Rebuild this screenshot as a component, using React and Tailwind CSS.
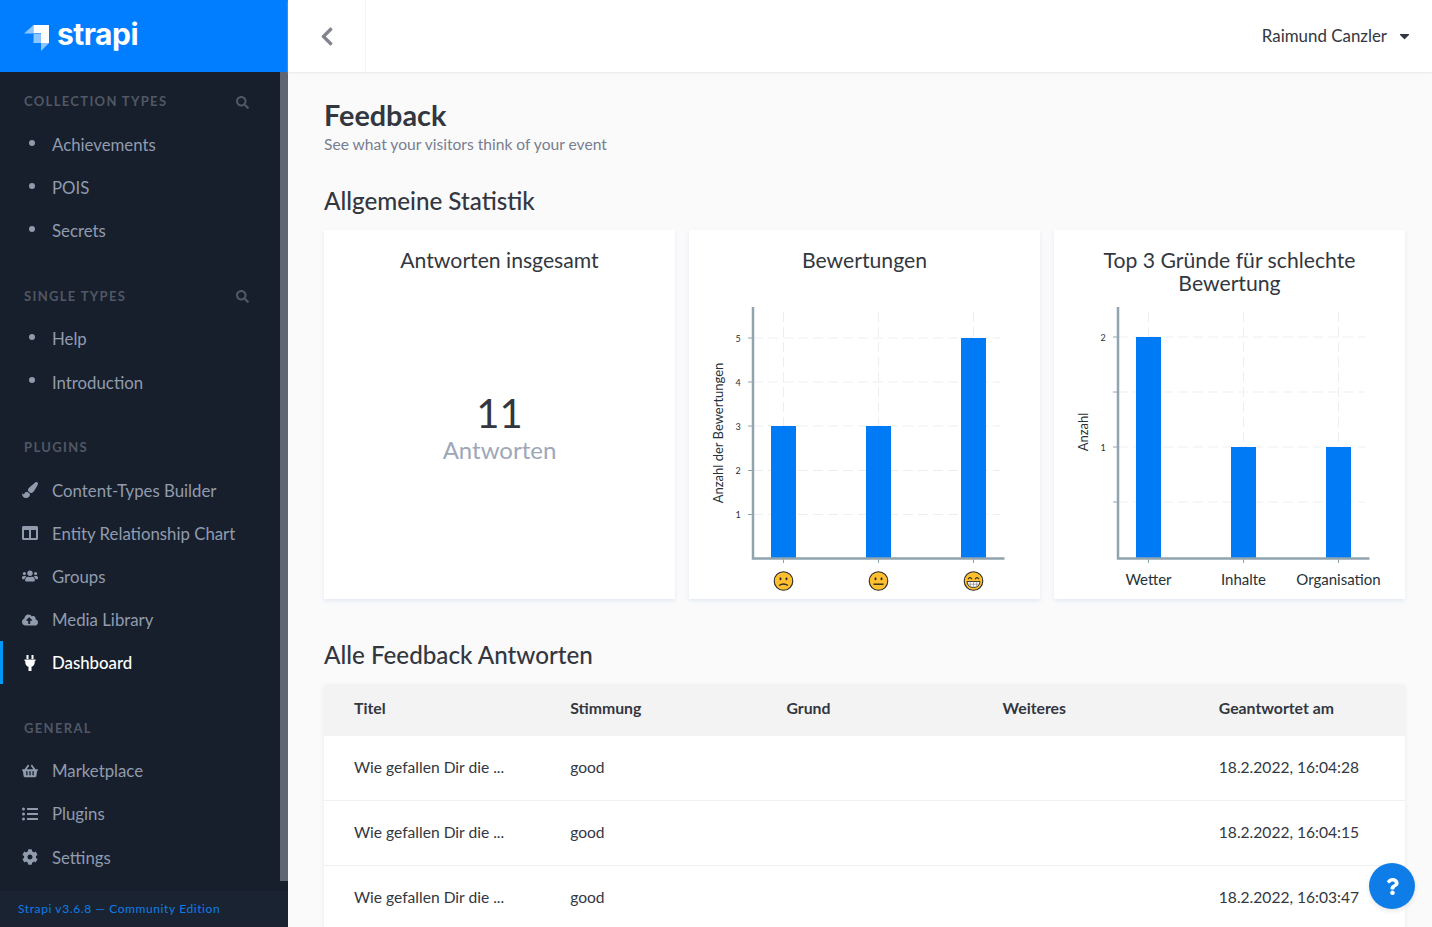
import { FaSearch, FaPaintBrush, FaColumns, FaUsers, FaCloudUploadAlt, FaShoppingBasket, FaListUl, FaCog, FaChevronLeft, FaCaretDown, FaQuestion } from 'react-icons/fa'

// upright plug, the one in the package leans
function PlugIcon({ className }) {
  return (
    <svg viewBox="0 0 16 16" className={className} fill="currentColor">
      <path d="M4.5 0h2v4h-2zM9.5 0h2v4h-2z" />
      <path d="M2.5 4.5h11v1.5h-.8v1.5c0 2.4-1.4 3.7-3.2 4.2V16h-3v-4.300c-1.800-.5-3.200-1.800-3.200-4.200V6h-.8z" />
    </svg>
  )
}

function SectionTitle({ label, search }) {
  return (
    <div className="h-[51.4px] pt-[9.6px] pl-6 pr-[31px] flex items-center justify-between">
      <span className="text-[13px] font-bold tracking-[1.33px] uppercase text-[#515764]">{label}</span>
      {search && <FaSearch className="w-[13px] h-[13px] text-[#515764]" />}
    </div>
  )
}

function NavItem({ label, icon: Icon, active }) {
  return (
    <div className={`relative h-[43.2px] flex items-center text-[16.8px] ${active ? 'text-white font-medium' : 'text-[#919BAE]'}`}>
      {active && <div className="absolute left-0 top-0 bottom-0 w-[3px] bg-[#0097F7]" />}
      <div className="w-[52px] flex justify-center pl-[8px] shrink-0">
        {Icon ? (
          <Icon className="w-[16px] h-[16px]" />
        ) : (
          <span className="w-[6px] h-[6px] mb-[4px] ml-[4px] rounded-full bg-[#919BAE]" />
        )}
      </div>
      <span>{label}</span>
    </div>
  )
}

function Sidebar() {
  return (
    <aside className="w-[288px] shrink-0 h-full flex flex-col bg-[#171F2C]">
      <div className="h-[72px] shrink-0 bg-[#007EFF] flex items-center pl-6 gap-[7px]">
        <svg width="26" height="28" viewBox="0 0 26 28" className="shrink-0 mt-[4px]">
          <path d="M9.500 1H25V19H17V9H9.500Z" fill="#fff" />
          <path d="M0 9.500L9.500 1V9.500Z M9.500 9.500H17V19H9.500Z M17 19H25L17 27Z" fill="#fff" fillOpacity="0.55" />
        </svg>
        <span className="font-['Inter',sans-serif] text-[30px] font-bold leading-none text-white tracking-[-0.5px] pb-[5px]">strapi</span>
      </div>
      <div className="flex-1 flex min-h-0">
        <nav className="flex-1 min-w-0 -mt-[0.4px]">
          <SectionTitle label="Collection Types" search />
          <NavItem label="Achievements" />
          <NavItem label="POIS" />
          <NavItem label="Secrets" />
          <div className="mt-[13.4px]">
            <SectionTitle label="Single Types" search />
            <NavItem label="Help" />
            <NavItem label="Introduction" />
          </div>
          <div className="mt-[13.4px]">
            <SectionTitle label="Plugins" />
            <NavItem label="Content-Types Builder" icon={FaPaintBrush} />
            <NavItem label="Entity Relationship Chart" icon={FaColumns} />
            <NavItem label="Groups" icon={FaUsers} />
            <NavItem label="Media Library" icon={FaCloudUploadAlt} />
            <NavItem label="Dashboard" icon={PlugIcon} active />
          </div>
          <div className="mt-[13.4px]">
            <SectionTitle label="General" />
            <NavItem label="Marketplace" icon={FaShoppingBasket} />
            <NavItem label="Plugins" icon={FaListUl} />
            <NavItem label="Settings" icon={FaCog} />
          </div>
        </nav>
        <div className="w-[8px] shrink-0 mb-[10px] bg-[#5F6573]" />
      </div>
      <div className="h-[36px] shrink-0 bg-[#1A2332] flex items-center pl-[18px] text-[12px] tracking-[0.6px] text-[#0E7DE7]">
        Strapi v3.6.8 — Community Edition
      </div>
    </aside>
  )
}

function Face({ cx, kind }) {
  return (
    <g transform={`translate(${cx} 281)`}>
      <circle r="9.3" fill="#FFBF2E" stroke="#2A2A2A" strokeWidth="1.1" />
      {kind !== 'good' && (
        <>
          <ellipse cx="-3" cy="-2.200" rx="1" ry="1.500" fill="#2A2A2A" />
          <ellipse cx="3" cy="-2.200" rx="1" ry="1.500" fill="#2A2A2A" />
        </>
      )}
      {kind === 'bad' && <path d="M-4.500 4.500Q0 1.500 4.500 4.500" fill="none" stroke="#2A2A2A" strokeWidth="1.300" />}
      {kind === 'ok' && <path d="M-5 3.200H5" stroke="#2A2A2A" strokeWidth="1.400" />}
      {kind === 'good' && (
        <>
          <path d="M-5.500 -1.800Q-3.500 -5 -1.500 -1.800M1.500 -1.800Q3.500 -5 5.500 -1.800" fill="none" stroke="#2A2A2A" strokeWidth="1.100" />
          <path d="M-6.500 0.500H6.500Q6 6.500 0 6.500Q-6 6.500 -6.500 0.500Z" fill="#fff" stroke="#2A2A2A" strokeWidth="0.900" />
          <path d="M-6 3.200H6M-3.200 0.500V6M0 0.500V6.500M3.200 0.500V6" stroke="#777" strokeWidth="0.600" />
        </>
      )}
    </g>
  )
}

function BarChart({ axisLabel, axisLabelY, grid, bars, xLabels, faces }) {
  return (
    <svg viewBox="0 0 351 299" className="block w-full h-[299px] shrink-0 font-['Lato',sans-serif]">
      {grid.map((g) => (
        <g key={g.y}>
          <line x1="64" x2="311" y1={g.y} y2={g.y} stroke="#ECEFF1" strokeDasharray="10 5" />
          <line x1="59" x2="64" y1={g.y} y2={g.y} stroke="#90A4AE" />
          {g.label && (
            <text x="49" y={g.y + 3.5} textAnchor="middle" fontSize="9" fill="#263238">{g.label}</text>
          )}
        </g>
      ))}
      {bars.map((b) => (
        <g key={b.x}>
          <line x1={b.x} x2={b.x} y1="12" y2="258" stroke="#ECEFF1" strokeDasharray="10 5" />
          <rect x={b.x - 12.5} y={b.y} width="25" height={258 - b.y} fill="#007AF5" />
          <line x1={b.x} x2={b.x} y1="258" y2="263" stroke="#90A4AE" />
        </g>
      ))}
      <path d="M64 7V258.500H315.500" fill="none" stroke="#90A4AE" strokeWidth="2.500" />
      <text transform={`translate(34 ${axisLabelY}) rotate(-90)`} textAnchor="middle" fontSize="13" fill="#263238">{axisLabel}</text>
      {xLabels && xLabels.map((l, i) => (
        <text key={l} x={bars[i].x} y="285" textAnchor="middle" fontSize="15" fill="#263238">{l}</text>
      ))}
      {faces && faces.map((f, i) => <Face key={f} cx={bars[i].x} kind={f} />)}
    </svg>
  )
}

function Card({ title, children }) {
  return (
    <div className="bg-white h-[369px] flex flex-col shadow-[0_2px_4px_#E3E9F3]">
      <div className="h-[70px] shrink-0 pt-[19px] px-[30px] text-center text-[21.2px] leading-[23px] text-[#333740]">{title}</div>
      {children}
    </div>
  )
}

const rows = ['18.2.2022, 16:04:28', '18.2.2022, 16:04:15', '18.2.2022, 16:03:47']

function FeedbackTable() {
  return (
    <div className="mt-[13px] bg-white rounded-t-[3px] shadow-[0_2px_4px_#E3E9F3]">
      <div className="h-[52px] pb-[4px] grid grid-cols-5 items-center bg-[#F3F3F4] rounded-t-[3px] text-[15.8px] font-bold text-[#333740]">
        {['Titel', 'Stimmung', 'Grund', 'Weiteres', 'Geantwortet am'].map((h) => (
          <div key={h} className="pl-[30px]">{h}</div>
        ))}
      </div>
      {rows.map((date) => (
        <div key={date} className="h-[65px] grid grid-cols-5 items-center border-b border-[#F1F1F2] text-[15.6px] text-[#333740]">
          <div className="pl-[30px] whitespace-nowrap">Wie gefallen Dir die ...</div>
          <div className="pl-[30px]">good</div>
          <div />
          <div />
          <div className="pl-[30px] whitespace-nowrap">{date}</div>
        </div>
      ))}
    </div>
  )
}

export default function App() {
  return (
    <div className="relative h-screen overflow-hidden flex font-['Lato',sans-serif] bg-[#FAFAFB]">
      <Sidebar />
      <div className="flex-1 min-w-0 flex flex-col h-full">
        <header className="h-[72px] shrink-0 bg-white shadow-[0_1px_2px_rgba(219,219,219,0.6)] flex items-center justify-between pr-[22px] relative">
          <div className="w-[78px] h-full border-r border-[#F3F4F4] flex items-center justify-center">
            <FaChevronLeft className="w-[16px] h-[21px] text-[#81848F]" />
          </div>
          <div className="flex items-center gap-[12px] text-[16.9px] text-[#333740]">
            <span>Raimund Canzler</span>
            <FaCaretDown className="w-[11px] h-[16px]" />
          </div>
        </header>
        <main className="flex-1 min-h-0 overflow-hidden pl-9 pr-[27px] pt-[25px]">
          <h1 className="text-[28.8px] leading-[36px] font-bold text-[#333740]">Feedback</h1>
          <p className="text-[15.6px] leading-[20px] mt-[1px] text-[#787E8F]">See what your visitors think of your event</p>
          <h2 className="mt-[31px] text-[24.2px] leading-[32px] font-medium text-[#333740]">Allgemeine Statistik</h2>
          <div className="mt-[13px] grid grid-cols-3 gap-[14px]">
            <Card title="Antworten insgesamt">
              <div className="flex-1 flex flex-col items-center pt-[90px]">
                <div className="text-[40px] leading-[46px] text-[#333740]">11</div>
                <div className="text-[24px] leading-[28px] text-[#9EA7B8]">Antworten</div>
              </div>
            </Card>
            <Card title="Bewertungen">
              <BarChart
                axisLabel="Anzahl der Bewertungen"
                axisLabelY={133}
                grid={[
                  { y: 38, label: '5' },
                  { y: 82, label: '4' },
                  { y: 126, label: '3' },
                  { y: 170.5, label: '2' },
                  { y: 214.5, label: '1' },
                ]}
                bars={[
                  { x: 94.5, y: 126 },
                  { x: 189.5, y: 126 },
                  { x: 284.5, y: 38 },
                ]}
                faces={['bad', 'ok', 'good']}
              />
            </Card>
            <Card title="Top 3 Gründe für schlechte Bewertung">
              <BarChart
                axisLabel="Anzahl"
                axisLabelY={132}
                grid={[
                  { y: 37, label: '2' },
                  { y: 92 },
                  { y: 147, label: '1' },
                  { y: 202 },
                ]}
                bars={[
                  { x: 94.5, y: 37 },
                  { x: 189.5, y: 147 },
                  { x: 284.5, y: 147 },
                ]}
                xLabels={['Wetter', 'Inhalte', 'Organisation']}
              />
            </Card>
          </div>
          <h2 className="mt-[40px] text-[24.2px] leading-[32px] font-medium text-[#333740]">Alle Feedback Antworten</h2>
          <FeedbackTable />
        </main>
      </div>
      <button className="absolute left-[1369px] top-[863px] w-[46px] h-[46px] rounded-full bg-[#0E7DE7] flex items-center justify-center shadow-[0_2px_4px_rgba(0,0,0,0.1)]">
        <FaQuestion className="w-[13px] h-[17px] text-white" />
      </button>
    </div>
  )
}
